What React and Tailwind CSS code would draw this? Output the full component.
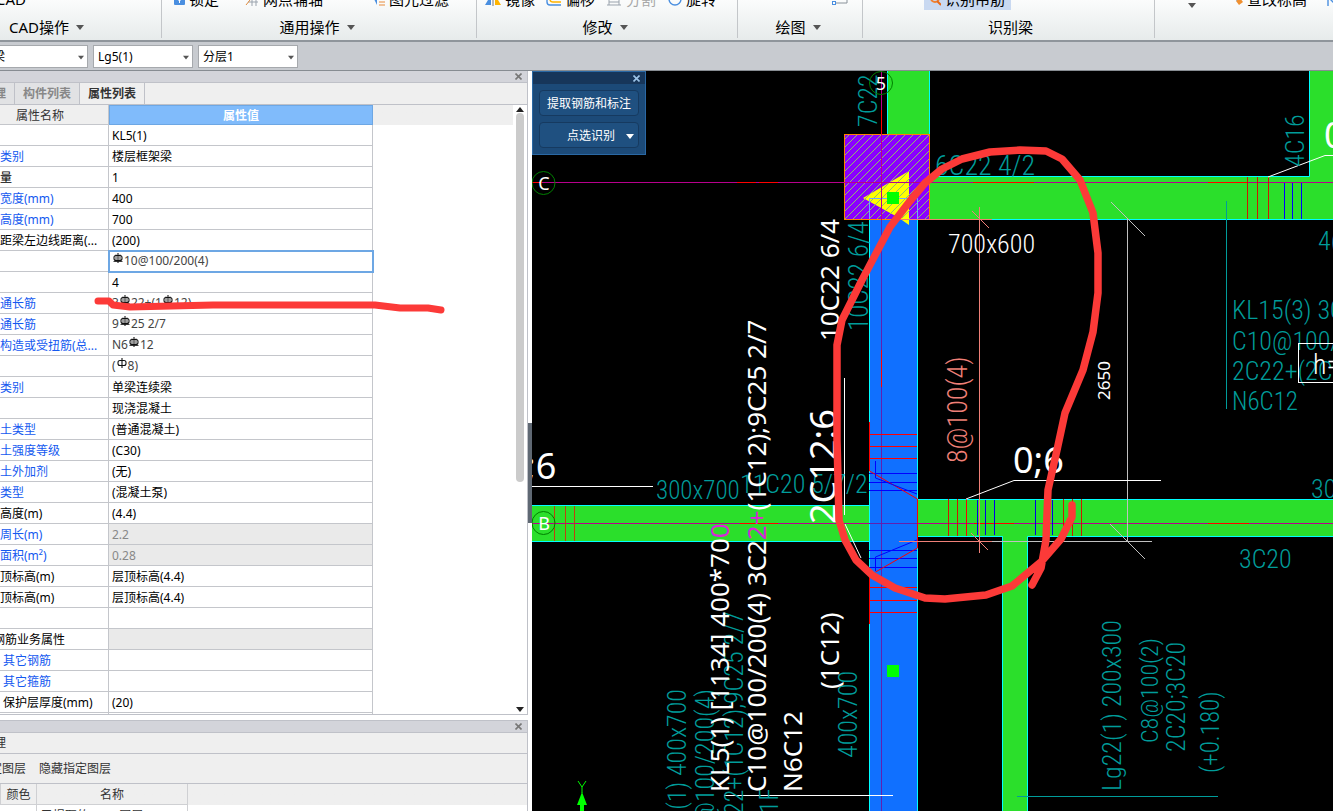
/**
 * App.jsx
 *
 * - Ribbon (group labels + bottom of the tool row)
 * - Floor / component selector bar
 * - Property list panel and layer panel
 * - Beam drawing canvas with recognition popup
 */

// ── Small shared pieces ──────────────────────────────────────────────────────
const Caret = ({ className = 'text-[#555]' }) => (
  <svg width="8" height="5" viewBox="0 0 8 5" className={className} aria-hidden="true">
    <path d="M0 0h8L4 5z" fill="currentColor" />
  </svg>
);

const CloseIcon = () => (
  <svg width="7" height="7" viewBox="0 0 7 7" fill="none" stroke="currentColor" strokeWidth="1.6">
    <path d="M.5.5l6 6M6.5.5l-6 6" />
  </svg>
);

// rebar grade marks: one base line for grade II, two for grade III
const Rebar = ({ grade = 3 }) => (
  <svg width="12" height="12" viewBox="0 0 12 12" fill="none" stroke="#111" strokeWidth="1.1" className="inline-block align-baseline">
    <rect x="2" y="2.5" width="8" height="5" rx="2" />
    <path d="M6 0v10" />
    {grade === 3 && <path d="M4 1.500v7M8 1.500v7M1.500 8.500h9" strokeWidth="0.8" />}
  </svg>
);

// ── Ribbon ───────────────────────────────────────────────────────────────────
const ToolButton = ({ icon, children, className = '', color = 'text-black' }) => (
  <button className={`flex h-[22px] items-center gap-1 whitespace-nowrap text-[15px] leading-[22px] ${color} ${className}`}>
    {icon}
    <span>{children}</span>
  </button>
);

const icons = {
  lock: (
    <svg width="11" height="14" viewBox="0 0 11 14"><rect width="11" height="13" rx="1" fill="#4a8fe0" /><path d="M5.5 6v5M4 8h3" stroke="#fff" /></svg>
  ),
  axis: (
    <svg width="14" height="14" viewBox="0 0 14 14" fill="none"><path d="M4 6h10M3 10h10M7 2v12M11 2v12" stroke="#9aa3ad" /><path d="M1 13l4-5" stroke="#e08b3c" /></svg>
  ),
  filter: (
    <svg width="12" height="14" viewBox="0 0 12 14"><path d="M0 5h4v8z" fill="#4a8fe0" /><path d="M6 7h6M6 10h6M6 13h6" stroke="#e88b3c" /></svg>
  ),
  mirror: (
    <svg width="16" height="14" viewBox="0 0 16 14"><path d="M0 13l6-10v10z" fill="#4a8fe0" /><path d="M8 2v12" stroke="#777" /><path d="M10 3v10h6z" fill="#ffb400" /></svg>
  ),
  offset: (
    <svg width="16" height="14" viewBox="0 0 16 14" fill="none" strokeWidth="1.4"><path d="M2 2v8q0 3 3 3h11" stroke="#4a8fe0" /><path d="M5 2v5q0 3 3 3h8" stroke="#ffb400" /></svg>
  ),
  split: (
    <svg width="16" height="14" viewBox="0 0 16 14" fill="none" stroke="#9aa3ad"><path d="M3 2v8h10V2M1 13h14M3 10v3M13 10v3M8 2v5" /></svg>
  ),
  rotate: (
    <svg width="14" height="14" viewBox="0 0 14 14" fill="none"><circle cx="7" cy="7" r="6" stroke="#4a8fe0" strokeWidth="1.4" /></svg>
  ),
  find: (
    <svg width="11" height="14" viewBox="0 0 11 14" fill="none" strokeWidth="2"><circle cx="5" cy="6" r="4" stroke="#f08030" /><path d="M7 9l4 4" stroke="#e86a1c" /></svg>
  ),
  level: (
    <svg width="12" height="14" viewBox="0 0 12 14"><path d="M0 4h6v5z" fill="#4a8fe0" /><path d="M5 9l4-3 3 4-4 3z" fill="#f09030" /></svg>
  ),
};

const RibbonGroup = ({ label, caret = true, className, children }) => (
  <section className={`flex h-[38px] flex-col border-[#c3c6c9] ${className}`}>
    <div className="flex h-[10px] shrink-0 items-end">{children}</div>
    <button className="flex h-[34px] shrink-0 items-center gap-[7px] self-center whitespace-nowrap text-[15px] text-black">
      {label}
      {caret && <Caret />}
    </button>
  </section>
);

const Ribbon = () => (
  <header className="flex h-[42px] shrink-0 overflow-hidden border-b-2 border-[#8f959b] bg-linear-to-b from-[#fbfcfc] to-[#e7ebeb]">
    <RibbonGroup label="CAD操作" className="w-[162px] shrink-0 border-r pr-[68px]">
      <ToolButton className="-ml-1">CAD</ToolButton>
    </RibbonGroup>
    <RibbonGroup label="通用操作" className="w-[315px] shrink-0 border-r pr-1">
      <ToolButton icon={icons.lock} className="ml-3">锁定</ToolButton>
      <ToolButton icon={icons.axis} className="ml-[26px]">网点辅轴</ToolButton>
      <ToolButton icon={icons.filter} className="ml-[50px]">图元过滤</ToolButton>
    </RibbonGroup>
    <RibbonGroup label="修改" className="w-[261px] shrink-0 border-r pr-1">
      <ToolButton icon={icons.mirror} className="ml-2">镜像</ToolButton>
      <ToolButton icon={icons.offset} className="ml-[10px]">偏移</ToolButton>
      <ToolButton icon={icons.split} className="ml-[11px]" color="text-[#a8a8a8]">分割</ToolButton>
      <ToolButton icon={icons.rotate} className="ml-3">旋转</ToolButton>
    </RibbonGroup>
    <RibbonGroup label="绘图" className="w-[125px] shrink-0 border-r pr-1">
      <svg width="16" height="14" viewBox="0 0 16 14" fill="none" className="mb-1 ml-[94px] h-[14px]" stroke="#8a929a">
        <path d="M2 11h13V0" /><rect x="0.500" y="9.500" width="3" height="3" stroke="#4a8fe0" fill="#fff" />
      </svg>
    </RibbonGroup>
    <RibbonGroup label="识别梁" caret={false} className="w-[292px] shrink-0 border-r pl-1">
      <div className="ml-[57px] flex bg-[#c9d9f1] pr-1.5 pl-1.5">
        <ToolButton icon={icons.find}>识别吊筋</ToolButton>
      </div>
    </RibbonGroup>
    <section className="flex h-[10px] grow items-end">
      <Caret className="mb-[2px] ml-[33px] shrink-0 text-[#555]" />
      <ToolButton icon={icons.level} className="ml-[35px] shrink-0">查改标高</ToolButton>
      <svg width="12" height="14" viewBox="0 0 12 14" fill="none" stroke="#4a8fe0" strokeWidth="1.400" className="ml-5 shrink-0">
        <path d="M1 10V1l8 8V1" />
      </svg>
    </section>
  </header>
);

// ── Selector bar ─────────────────────────────────────────────────────────────
const Combo = ({ label, value, className, inset = 'pl-1' }) => (
  <div className={`relative h-[23px] shrink-0 ${className}`}>
    <select
      aria-label={label}
      defaultValue={value}
      className={`block size-full appearance-none border border-[#a6a9ad] bg-white text-xs text-black ${inset}`}
    >
      <option>{value}</option>
    </select>
    <Caret className="pointer-events-none absolute top-[10px] right-1 w-[6px] text-[#555]" />
  </div>
);

const SelectorBar = () => (
  <div className="flex h-[29px] shrink-0 items-start gap-[5px] overflow-hidden border-b border-[#878c92] bg-[#c8cbd0] pt-[3px]">
    <Combo label="构件类型" value="梁" className="-ml-3 w-[100px]" inset="pl-1" />
    <Combo label="构件" value="Lg5(1)" className="w-[100px]" />
    <Combo label="分层" value="分层1" className="w-[100px]" />
  </div>
);

// ── Property panel ───────────────────────────────────────────────────────────
const ROWS = [
  { name: '', value: 'KL5(1)' },
  { name: '类别', value: '楼层框架梁', blue: true },
  { name: '量', value: '1' },
  { name: '宽度(mm)', value: '400', blue: true },
  { name: '高度(mm)', value: '700', blue: true },
  { name: '距梁左边线距离(...', value: '(200)' },
  { name: '', value: <><Rebar />10@100/200(4)</>, soft: true, active: true },
  { name: '', value: '4' },
  { name: '通长筋', value: <>3<Rebar />22+(1<Rebar />12)</>, blue: true, soft: true },
  { name: '通长筋', value: <>9<Rebar />25 2/7</>, blue: true, soft: true },
  { name: '构造或受扭筋(总...', value: <>N6<Rebar />12</>, blue: true, soft: true },
  { name: '', value: <>(<Rebar grade={2} />8)</>, soft: true },
  { name: '类别', value: '单梁连续梁', blue: true },
  { name: '', value: '现浇混凝土' },
  { name: '土类型', value: '(普通混凝土)', blue: true },
  { name: '土强度等级', value: '(C30)', blue: true },
  { name: '土外加剂', value: '(无)', blue: true },
  { name: '类型', value: '(混凝土泵)', blue: true },
  { name: '高度(m)', value: '(4.4)' },
  { name: '周长(m)', value: '2.2', blue: true, disabled: true },
  { name: '面积(m²)', value: '0.28', blue: true, disabled: true },
  { name: '顶标高(m)', value: '层顶标高(4.4)' },
  { name: '顶标高(m)', value: '层顶标高(4.4)' },
  { name: '', value: '' },
  { name: '钢筋业务属性', value: '', disabled: true, cut: true },
  { name: '其它钢筋', value: '', blue: true, child: true },
  { name: '其它箍筋', value: '', blue: true, child: true },
  { name: '保护层厚度(mm)', value: '(20)', child: true },
  { name: '', value: '' },
];

const PanelTitle = () => (
  <div className="flex h-3 shrink-0 items-center justify-end border-b border-[#bfc1c8] bg-[#d3d4da] pr-[5px] text-[#777]">
    <button aria-label="关闭"><CloseIcon /></button>
  </div>
);

const PropertyTable = () => (
  <table className="w-[373px] table-fixed border-separate border-spacing-0 text-xs text-black">
    <thead>
      <tr className="h-5">
        <th className="w-[109px] border-r border-b border-[#c4c6cb] bg-[#efefef] p-0 pt-[2px] pr-7 font-normal text-[#333]">属性名称</th>
        <th className="border border-[#6da7e4] bg-[#80bbfb] p-0 pt-[2px] font-bold text-white">属性值</th>
      </tr>
    </thead>
    <tbody>
      {ROWS.map((row, i) => (
        <tr key={i} className="h-[21px]">
          <td className={`overflow-hidden border-r border-b border-[#c4c6cb] p-0 pt-[2px] leading-[18px] whitespace-nowrap ${row.blue ? 'text-[#1459f0]' : ''} ${row.child ? 'pl-[3px]' : ''}`}>
            <span className={row.cut ? '-ml-[7px]' : ''}>{row.name}</span>
          </td>
          <td className={`border-r border-b border-[#c4c6cb] p-0 pl-[3px] whitespace-nowrap ${row.disabled ? 'bg-[#eaeaea] text-[#888]' : ''} ${row.soft ? 'leading-5 text-[#444]' : 'pt-[2px] leading-[18px]'} ${row.active ? 'outline-2 -outline-offset-1 outline-[#6da7e4]' : ''}`}>
            {row.value}
          </td>
        </tr>
      ))}
    </tbody>
  </table>
);

const PropertyPanel = () => (
  <section className="relative flex min-h-0 grow flex-col border-r border-b border-[#bfc1c8] bg-white">
    <PanelTitle />
    <div role="tablist" className="flex h-[22px] shrink-0 border-b border-[#bfc1c8] bg-[#efefef] text-xs font-bold text-[#888]">
      <button role="tab" className="w-[15px] overflow-hidden border-r border-[#bfc1c8] bg-[#e1e2e4] pr-2 whitespace-nowrap">
        <span className="-ml-[6px]">理</span>
      </button>
      <button role="tab" className="w-[65px] border-r border-[#bfc1c8] bg-[#e1e2e4]">构件列表</button>
      <button role="tab" className="w-[65px] border-r border-[#bfc1c8] text-[#333]">属性列表</button>
    </div>
    <div className="flex min-h-0 grow">
      <div className="min-w-0 grow overflow-hidden bg-linear-to-b from-[#efefef] from-[20px] to-white to-[20px]">
        <PropertyTable />
      </div>
      <div className="flex w-[14px] shrink-0 flex-col items-center pt-[2px] pb-[2px]">
        <Caret className="shrink-0 rotate-180 text-[#222]" />
        <div className="mt-[1px] h-[61%] w-2 rounded-full bg-[#cbcbcb]" />
        <Caret className="mt-auto shrink-0 text-[#222]" />
      </div>
    </div>
    {/* review mark across the top rebar row */}
    <svg className="pointer-events-none absolute top-[222px] left-[90px]" width="360" height="24" viewBox="90 293 360 24" fill="none">
      <path d="M98 301L109 301L113 305L130 307L213 305L375 305L400 308L428 308L441 310" stroke="#fc3a38" strokeWidth="7" strokeLinecap="round" strokeLinejoin="round" />
    </svg>
  </section>
);

const LayerPanel = () => (
  <section className="mt-[5px] h-[91px] shrink-0 overflow-hidden border-t border-r border-[#bfc1c8] bg-white text-xs text-[#333]">
    <PanelTitle />
    <div className="h-[21px] border-b border-[#bfc1c8] bg-[#efefef] leading-5">
      <span className="-ml-[6px]">理</span>
    </div>
    <div className="flex h-[30px] items-center gap-[13px] border-b border-[#bfc1c8] bg-[#efefef]">
      <button className="-ml-[10px]">定图层</button>
      <button>隐藏指定图层</button>
    </div>
    <div className="bg-linear-to-b from-[#efefef] from-[21px] to-white to-[21px]">
      <table className="w-[188px] table-fixed border-separate border-spacing-0">
        <thead>
          <tr className="h-[21px]">
            <th className="w-[37px] border-r border-b border-l border-[#cfd0d3] p-0 pt-[2px] font-normal">颜色</th>
            <th className="border-r border-b border-[#cfd0d3] p-0 pt-[2px] font-normal">名称</th>
          </tr>
        </thead>
        <tbody>
          <tr className="h-[21px]">
            <td className="border-r border-[#cfd0d3] p-0" />
            <td className="border-r border-[#cfd0d3] p-0 pl-1 whitespace-nowrap">已提取的 CAD 图层</td>
          </tr>
        </tbody>
      </table>
    </div>
  </section>
);

// ── Drawing ──────────────────────────────────────────────────────────────────
const TEAL = '#009c9a';
const CAD_FONT = '"Liberation Sans Narrow", "Roboto Condensed", "Noto Sans CJK SC", sans-serif';
const UI_FONT = '"Noto Sans", "Noto Sans CJK SC", sans-serif';

const Label = ({ x, y, up, size, fill = TEAL, font = CAD_FONT, weight = 300, anchor = 'start', children }) => (
  <text
    transform={up ? `translate(${x} ${y}) rotate(-90)` : `translate(${x} ${y})`}
    fontSize={size} fill={fill} fontFamily={font} fontWeight={weight} textAnchor={anchor}
  >
    {children}
  </text>
);

const Ticks = ({ at, from, to, color, horizontal }) => (
  <path
    d={at.map((p) => (horizontal ? `M${from} ${p}.5H${to}` : `M${p}.5 ${from}V${to}`)).join('')}
    stroke={color}
  />
);

const Drawing = () => (
  <svg className="block size-full" viewBox="532 71 801 740" preserveAspectRatio="xMinYMin slice" fill="none" strokeWidth="1">
    <defs>
      <pattern id="hatch" width="8" height="8" patternUnits="userSpaceOnUse">
        <path d="M-1 9L9 -1M-1 1L1 -1M7 9L9 7" stroke="#8fbf6a" strokeWidth="1" />
      </pattern>
    </defs>

    {/* beams */}
    <g fill="#2bdf2b">
      <path d="M887 71h43v105h-43zM930 176h403v43H930zM1309 71h24v106h-24z" />
      <path d="M532 505h337v36H532zM917 499h416v37H917zM1002 536h26v275h-26z" />
    </g>
    <path d="M887.500 71V134M929.500 71V134M930 176.500H1309.500V71M930 219.500H1333" stroke="#00ffff" />
    <path d="M532 505.500H869M532 541.500H869M917 499.500H1333M917 536.500H1002.500V811M1027.500 811V536.500H1333" stroke="#00ffff" />

    {/* column */}
    <rect x="844.500" y="134.500" width="85" height="85" fill="#8b00ff" />
    <path d="M863 198L909 171V219H901z" fill="#ffff00" />
    <rect x="844.500" y="134.500" width="85" height="85" fill="url(#hatch)" stroke="#ff8000" />
    <path d="M869.500 219V198.500H917.500V219" stroke="#70a8ff" />

    {/* selected beam */}
    <path d="M869 220h48v591h-48z" fill="#1070ff" />
    <path d="M869.500 220V811M917.500 220V811" stroke="#00ffff" />
    <path d="M899 218L909 225V218z" fill="#ffff00" />
    <path d="M899 219.500H992" stroke="#f08070" />

    {/* axes */}
    <path d="M532 182.500H1333M881.500 71V220M532 523.500H869M917 523.500H1333" stroke="#b8008c" />
    <path d="M881.500 220V811" stroke="#6020b0" />
    <path d="M869 523.500H917" stroke="#6020b0" />
    <path d="M532 182.500h10M737 182.500h19M759 182.500h19M973 182.500h61M1208 182.500h40M881.500 110V134M881.500 350V387M740 523.500h38M974 523.500h40M1208 523.500h41" stroke="#ff0000" />

    {/* stirrups */}
    <Ticks at={[948, 957, 1063, 1072, 1081]} from={499} to={536} color="#d01800" />
    <Ticks at={[966]} from={499} to={536} color="#ff0000" />
    <Ticks at={[977, 985, 994, 1035, 1052]} from={500} to={535} color="#0000e8" />
    <Ticks at={[1247, 1257, 1268]} from={177} to={219} color="#d01800" />
    <Ticks at={[1284, 1292, 1301]} from={183} to={219} color="#0000ff" />
    <Ticks at={[554, 565, 574]} from={506} to={541} color="#c04010" />
    <Ticks horizontal at={[434, 446, 458, 587, 600, 612]} from={869} to={917} color="#ff0000" />
    <Ticks horizontal at={[473, 482, 490, 550, 558, 567]} from={869} to={917} color="#0000ff" />
    <path d="M869.500 422V471L917.500 499V548L875.500 572M869.500 575V624" stroke="#ff0000" />
    <path d="M875.500 461V478L917 494M917 540L875.500 557V571" stroke="#0000ff" />

    {/* dimension lines */}
    <path d="M979.500 207V553M972 211l17 17M971 533l17 17M899 541.500H992" stroke="#f08078" />
    <path d="M1127.500 219V541M1111 202l34 34M1110 524l35 35M992 541.500H1152" stroke="#c0c0c0" />
    <path d="M1226.500 201V409M1017 796.500H1218" stroke={TEAL} />

    {/* leaders */}
    <path d="M1268 177L1325 155.500H1333M966 499L1014 480.500H1161M532 486.500H653M844.500 378V515M845 524L861 558M724 795.500H893" stroke="#fff" />

    {/* source drawing text */}
    <Label up x={877} y={127} size={26}>7C22</Label>
    <Label x={935} y={175} size={28}>6C22 4/2</Label>
    <Label up x={868} y={331} size={27}>10C22 6/4</Label>
    <Label up x={1304} y={167} size={26}>4C16</Label>
    <Label x={1318} y={250} size={26}>4(</Label>
    <Label x={1232} y={319} size={26}>KL15(3) 300x700</Label>
    <Label x={1232} y={350} size={26}>C10@100/200</Label>
    <Label x={1232} y={380} size={26}>2C22+(2C</Label>
    <Label x={1232} y={410} size={25}>N6C12</Label>
    <Label x={1239} y={568} size={26}>3C20</Label>
    <Label x={1311} y={498} size={26}>300</Label>
    <Label x={656} y={499} size={25}>300x700</Label>
    <Label x={740} y={493} size={26}>11C20 5/7/2</Label>
    <Label up x={1121} y={791} size={26}>Lg22(1) 200x300</Label>
    <Label up x={1158} y={743} size={24}>C8@100(2)</Label>
    <Label up x={1185} y={752} size={26}>2C20;3C20</Label>
    <Label up x={1219} y={773} size={25}>(+0.180)</Label>
    <Label up x={686} y={689} size={26} anchor="end">KL5(1) 400x700</Label>
    <Label up x={714} y={689} size={26} anchor="end">C10@100/200(4)</Label>
    <Label up x={743} y={611} size={26} anchor="end">3C22+(1C12);9C25 2/7</Label>
    <Label up x={778} y={788} size={26} anchor="end">N6C1F</Label>
    <Label up x={857} y={758} size={26}>400x700</Label>
    <Label x={948} y={253} size={26} fill="#fff">700x600</Label>
    <Label up x={967} y={463} size={28} fill="#f08078">8@100(4)</Label>

    {/* recognised text */}
    <g>
      <Label up x={839} y={341} size={26} fill="#fff" font={UI_FONT} weight={400}>10C22 6/4</Label>
      <Label up x={766} y={792} size={26} fill="#fff" font={UI_FONT} weight={400}>
        C10@100/200(4) 3C2<tspan fill="#d828d8">2+</tspan>(1C12);9C25 2/7
      </Label>
      <Label up x={729} y={792} size={26} fill="#fff" font={UI_FONT} weight={400}>
        KL5(1) [1134] 400*70<tspan fill="#d828d8">0</tspan>
      </Label>
      <Label up x={802} y={792} size={26} fill="#fff" font={UI_FONT} weight={400}>N6C12</Label>
      <Label up x={839} y={689} size={26} fill="#fff" font={UI_FONT} weight={400}>(1C12)</Label>
      <Label up x={836} y={524} size={36} fill="#fff" font={UI_FONT} weight={400}>2C12:6</Label>
      <Label up x={1110} y={400} size={17} fill="#fff" font={UI_FONT} weight={400}>2650</Label>
      <Label x={1013} y={473} size={36} fill="#fff" font={UI_FONT} weight={400}>0;6</Label>
      <Label x={526} y={479} size={36} fill="#fff" font={UI_FONT} weight={400}>;6</Label>
      <Label x={1324} y={148} size={36} fill="#fff" font={UI_FONT} weight={400}>0</Label>
    </g>
    <rect x="1298.500" y="343.500" width="50" height="39" stroke="#fff" />
    <Label x={1313} y={374} size={28} fill="#fff">h=</Label>

    {/* grid bubbles */}
    <g stroke="#008000" fontFamily={UI_FONT} fontSize="18" textAnchor="middle">
      <circle cx="543.500" cy="183" r="11.500" />
      <circle cx="881" cy="83" r="11.500" />
      <circle cx="543.500" cy="523" r="11.500" />
      <g fill="#fff" stroke="none">
        <text x="544" y="190">C</text>
        <text x="881" y="90">5</text>
        <text x="544" y="530">B</text>
      </g>
    </g>

    {/* grips and ucs icon */}
    <path d="M887 192h12v12h-12zM887 665h12v12h-12zM577 805l5-13 5 13zM580 805h4v6h-4z" fill="#00ff00" />
    <path d="M578 781l4 6 4-6M582 787v6" stroke="#00ff00" />

    {/* review mark */}
    <path
      d="M1072 505V517L1061 539L1041 562L1012 586L986 595L945 599L925 598L895 588L872 575L856 560L845 540L839 520L837 440V345L842 320L862 280L890 227L910 201L925 183L942 169L962 159L990 152L1020 150L1046 151L1062 159L1080 180L1093 213L1098 253V293L1093 332L1083 370L1065 413L1057 450L1048 490L1046 540L1041 568L1032 585"
      stroke="#fc3a38" strokeWidth="7.500" strokeLinecap="round" strokeLinejoin="round"
    />
  </svg>
);

const RecognitionPopup = () => (
  <div className="absolute top-0 left-0 w-[114px] border border-[#2a68a4] bg-[#1c4a78] text-xs text-white">
    <div className="flex h-3 items-center justify-end bg-[#17365a] pr-[5px] text-[#9cc4e8]">
      <button aria-label="关闭"><CloseIcon /></button>
    </div>
    <div className="flex flex-col gap-1.5 px-1.5 py-1.5">
      <button className="h-[26px] rounded-sm border border-[#163a60] bg-[#1f5080] pt-[2px] whitespace-nowrap">提取钢筋和标注</button>
      <button className="flex h-[26px] items-center justify-end gap-[11px] rounded-sm border border-[#163a60] bg-[#1f5080] pt-[2px] pr-1">
        点选识别
        <Caret className="text-white" />
      </button>
    </div>
  </div>
);

export default function App() {
  return (
    <div className="flex h-screen flex-col overflow-hidden bg-white font-['Noto_Sans','Noto_Sans_CJK_SC',sans-serif]">
      <Ribbon />
      <SelectorBar />
      <main className="flex min-h-0 grow">
        <aside className="flex w-[528px] shrink-0 flex-col">
          <PropertyPanel />
          <LayerPanel />
        </aside>
        <div className="flex w-1 shrink-0 items-center bg-white pt-16">
          <div className="h-[100px] w-full bg-[#5f6873]" />
        </div>
        <div className="relative min-w-0 grow overflow-hidden bg-black">
          <Drawing />
          <RecognitionPopup />
        </div>
      </main>
    </div>
  );
}
